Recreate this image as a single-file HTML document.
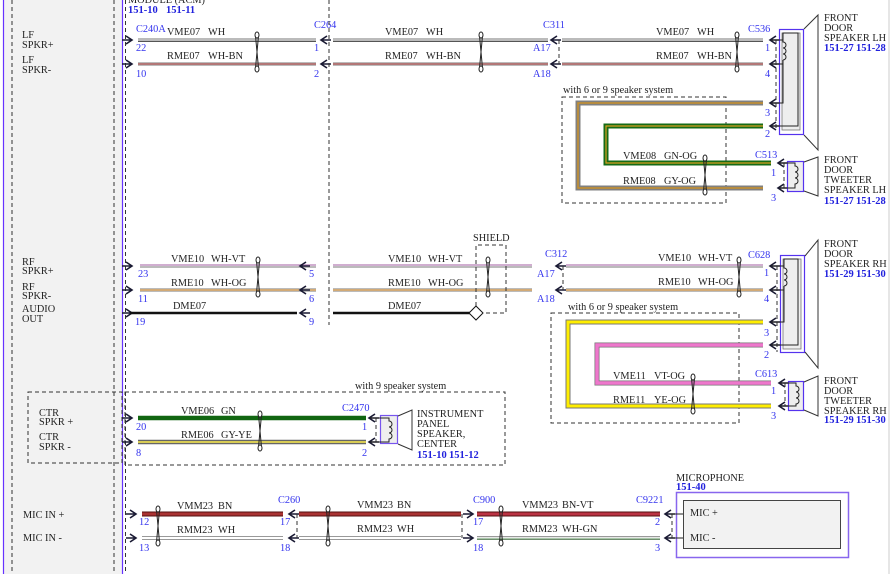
<!DOCTYPE html>
<html><head><meta charset="utf-8"><style>
html,body{margin:0;padding:0;background:#fff;}
svg{display:block;}
text{font-family:"Liberation Serif",serif;font-size:10.3px;fill:#222;}
.b{fill:#3333ee;}
.bb{fill:#2222dd;font-weight:bold;font-size:10.5px;}
.d{stroke:#333;stroke-width:1;stroke-dasharray:4,3;fill:none;}
.a{stroke:#1a1a33;stroke-width:1.5;fill:none;}
.t{stroke:#222;stroke-width:1;fill:#fff;}
</style></head><body>
<svg width="893" height="574" viewBox="0 0 893 574" xmlns="http://www.w3.org/2000/svg">
<defs>
<g id="tw"><path d="M-1.5 4 L1.5 36 M1.5 4 L-1.5 36" stroke="#222" stroke-width="1" fill="none"/><ellipse cx="0" cy="3" rx="2" ry="3" class="t"/><ellipse cx="0" cy="37" rx="2" ry="3" class="t"/></g>
<path id="ar" d="M-10 0 H0 M-6 -4 L0 0 L-6 4" stroke="#1a1a33" stroke-width="1.6" fill="none"/>
<path id="al" d="M10 0 H0 M6 -4 L0 0 L6 4" stroke="#1a1a33" stroke-width="1.6" fill="none"/>
</defs>
<rect x="3" y="0" width="119" height="574" fill="#f2f2f2"/>
<line x1="3.5" y1="0" x2="3.5" y2="574" stroke="#6633ff" stroke-width="1.2"/>
<line x1="122.5" y1="0" x2="122.5" y2="574" stroke="#6633ff" stroke-width="1.2"/>
<line x1="12" y1="0" x2="12" y2="574" class="d"/>
<line x1="114" y1="0" x2="114" y2="574" class="d"/>
<line x1="125.5" y1="0" x2="125.5" y2="574" class="d"/>
<line x1="889" y1="0" x2="889" y2="574" stroke="#ccc"/>
<text x="128" y="3">MODULE (ACM)</text>
<text x="128" y="13" class="bb">151-10</text><text x="166" y="13" class="bb">151-11</text>

<text x="22" y="38">LF</text><text x="22" y="48">SPKR+</text>
<text x="22" y="63">LF</text><text x="22" y="73">SPKR-</text>
<use href="#ar" x="132" y="40"/><use href="#ar" x="132" y="64"/>
<g stroke-linecap="butt">
<line x1="138" y1="40" x2="316" y2="40" stroke="#bbb" stroke-width="4"/><line x1="138" y1="41.5" x2="316" y2="41.5" stroke="#333" stroke-width="0.8"/>
<line x1="138" y1="64" x2="316" y2="64" stroke="#bbb" stroke-width="4"/><line x1="138" y1="64" x2="316" y2="64" stroke="#a33" stroke-width="1"/>
<line x1="333" y1="40" x2="548" y2="40" stroke="#bbb" stroke-width="4"/><line x1="333" y1="41.5" x2="548" y2="41.5" stroke="#333" stroke-width="0.8"/>
<line x1="333" y1="64" x2="548" y2="64" stroke="#bbb" stroke-width="4"/><line x1="333" y1="64" x2="548" y2="64" stroke="#a33" stroke-width="1"/>
<line x1="562" y1="40" x2="763" y2="40" stroke="#bbb" stroke-width="4"/><line x1="562" y1="41.5" x2="763" y2="41.5" stroke="#333" stroke-width="0.8"/>
<line x1="562" y1="64" x2="763" y2="64" stroke="#bbb" stroke-width="4"/><line x1="562" y1="64" x2="763" y2="64" stroke="#a33" stroke-width="1"/>
</g>
<text x="136" y="32" class="b">C240A</text><text x="167" y="35">VME07</text><text x="208" y="35">WH</text>
<text x="167" y="59">RME07</text><text x="208" y="59">WH-BN</text>
<text x="136" y="51" class="b">22</text><text x="136" y="77" class="b">10</text>
<use href="#tw" x="257" y="32"/>
<text x="314" y="28" class="b">C264</text><text x="314" y="51" class="b">1</text><text x="314" y="77" class="b">2</text>
<use href="#al" x="321" y="40"/><use href="#al" x="321" y="64"/>
<line x1="329" y1="0" x2="329" y2="325" class="d"/>
<text x="385" y="35">VME07</text><text x="426" y="35">WH</text>
<text x="385" y="59">RME07</text><text x="426" y="59">WH-BN</text>
<use href="#tw" x="481" y="32"/>
<text x="543" y="28" class="b">C311</text><text x="533" y="51" class="b">A17</text><text x="533" y="77" class="b">A18</text>
<use href="#al" x="551" y="40"/><use href="#al" x="551" y="64"/>
<line x1="559" y1="40" x2="559" y2="64" class="d"/>
<text x="656" y="35">VME07</text><text x="697" y="35">WH</text>
<text x="656" y="59">RME07</text><text x="697" y="59">WH-BN</text>
<use href="#tw" x="737" y="32"/>
<text x="748" y="32" class="b">C536</text><text x="765" y="51" class="b">1</text><text x="765" y="77" class="b">4</text>
<text x="765" y="116" class="b">3</text><text x="765" y="137" class="b">2</text>
<use href="#al" x="770" y="40"/><use href="#al" x="770" y="64"/><use href="#al" x="770" y="103"/><use href="#al" x="770" y="126"/>
<line x1="776" y1="40" x2="776" y2="130" class="d"/>
<rect x="779.5" y="29.5" width="24" height="105" fill="#fff" stroke="#5533ee" stroke-width="1.2"/>
<rect x="782" y="33" width="18" height="97" fill="#eee" stroke="#777" stroke-width="0.8"/>
<path d="M771 40 H783 V33 H798 V126 H771 M783 40 V42 a3 3 0 0 1 0 6 a3 3 0 0 1 0 6 a3 3 0 0 1 0 6 M783 60 V64 H771 M783 64 V103 H771" stroke="#222" fill="none" stroke-width="1"/>
<path d="M804 29 L818 15 V150 L804 135" stroke="#333" fill="none"/>
<text x="824" y="21">FRONT</text><text x="824" y="31">DOOR</text><text x="824" y="41">SPEAKER LH</text>
<text x="824" y="51" class="bb">151-27</text><text x="856" y="51" class="bb">151-28</text>
<text x="563" y="93">with 6 or 9 speaker system</text>
<rect x="562" y="97" width="164" height="106" class="d"/>
<path d="M763 103 H578 V188 H763" stroke="#808080" stroke-width="5" fill="none"/>
<path d="M763 103 H578 V188 H763" stroke="#c8902a" stroke-width="1.5" fill="none"/>
<path d="M763 126 H606 V163 H771" stroke="#166b16" stroke-width="5" fill="none"/>
<path d="M763 126 H606 V163 H771" stroke="#d8a020" stroke-width="1.2" fill="none"/>
<text x="623" y="159">VME08</text><text x="664" y="159">GN-OG</text>
<text x="623" y="184">RME08</text><text x="664" y="184">GY-OG</text>
<use href="#tw" x="705" y="155"/>
<text x="755" y="158" class="b">C513</text><text x="771" y="176" class="b">1</text><text x="771" y="201" class="b">3</text>
<use href="#al" x="778" y="163"/><use href="#al" x="778" y="188"/>
<line x1="784" y1="163" x2="784" y2="188" class="d"/>
<rect x="787.5" y="161.5" width="16" height="30" fill="#eee" stroke="#5533ee" stroke-width="1.2"/>
<path d="M779 163 H795 V166 a3 3 0 0 1 0 6 a3 3 0 0 1 0 6 a3 3 0 0 1 0 6 V188 H779" stroke="#222" fill="none"/>
<path d="M804 162 L818 157 V196 L804 191" stroke="#333" fill="none"/>
<text x="824" y="163">FRONT</text><text x="824" y="173">DOOR</text><text x="824" y="183">TWEETER</text><text x="824" y="193">SPEAKER LH</text>
<text x="824" y="204" class="bb">151-27</text><text x="856" y="204" class="bb">151-28</text>

<text x="22" y="265">RF</text><text x="22" y="274">SPKR+</text>
<text x="22" y="290">RF</text><text x="22" y="299">SPKR-</text>
<text x="22" y="312">AUDIO</text><text x="22" y="322">OUT</text>
<use href="#ar" x="132" y="266"/><use href="#ar" x="132" y="290"/><use href="#ar" x="132" y="313"/>
<line x1="140" y1="266" x2="316" y2="266" stroke="#bbb" stroke-width="4"/><line x1="140" y1="265" x2="316" y2="265" stroke="#e6a0e6" stroke-width="1"/>
<line x1="140" y1="290" x2="316" y2="290" stroke="#bbb" stroke-width="4"/><line x1="140" y1="290" x2="316" y2="290" stroke="#e89a30" stroke-width="1"/>
<line x1="130" y1="313" x2="297" y2="313" stroke="#111" stroke-width="2.5"/>
<text x="171" y="262">VME10</text><text x="211" y="262">WH-VT</text>
<text x="171" y="286">RME10</text><text x="211" y="286">WH-OG</text>
<text x="173" y="309">DME07</text>
<use href="#tw" x="258" y="257"/>
<text x="138" y="277" class="b">23</text><text x="138" y="302" class="b">11</text><text x="135" y="325" class="b">19</text>
<text x="309" y="277" class="b">5</text><text x="309" y="302" class="b">6</text><text x="309" y="325" class="b">9</text>
<use href="#al" x="300" y="266"/><use href="#al" x="300" y="290"/><use href="#al" x="300" y="313"/>
<line x1="333" y1="266" x2="532" y2="266" stroke="#bbb" stroke-width="4"/><line x1="333" y1="265" x2="532" y2="265" stroke="#e6a0e6" stroke-width="1"/>
<line x1="333" y1="290" x2="532" y2="290" stroke="#bbb" stroke-width="4"/><line x1="333" y1="290" x2="532" y2="290" stroke="#e89a30" stroke-width="1"/>
<line x1="333" y1="313" x2="470" y2="313" stroke="#111" stroke-width="2.5"/>
<text x="388" y="262">VME10</text><text x="428" y="262">WH-VT</text>
<text x="388" y="286">RME10</text><text x="428" y="286">WH-OG</text>
<text x="388" y="309">DME07</text>
<text x="473" y="241">SHIELD</text>
<path d="M476 313 V245 H506 V313 H483" class="d"/>
<path d="M476 306 L483 313 L476 320 L469 313 Z" stroke="#111" fill="#fff"/>
<use href="#tw" x="488" y="257"/>
<text x="545" y="257" class="b">C312</text><text x="537" y="277" class="b">A17</text><text x="537" y="302" class="b">A18</text>
<use href="#al" x="556" y="266"/><use href="#al" x="556" y="290"/>
<line x1="563" y1="266" x2="563" y2="290" class="d"/>
<line x1="566" y1="266" x2="763" y2="266" stroke="#bbb" stroke-width="4"/><line x1="566" y1="265" x2="763" y2="265" stroke="#e6a0e6" stroke-width="1"/>
<line x1="566" y1="290" x2="763" y2="290" stroke="#bbb" stroke-width="4"/><line x1="566" y1="290" x2="763" y2="290" stroke="#e89a30" stroke-width="1"/>
<text x="658" y="261">VME10</text><text x="698" y="261">WH-VT</text>
<text x="658" y="285">RME10</text><text x="698" y="285">WH-OG</text>
<use href="#tw" x="739" y="257"/>
<text x="748" y="258" class="b">C628</text><text x="764" y="276" class="b">1</text><text x="764" y="302" class="b">4</text>
<text x="764" y="336" class="b">3</text><text x="764" y="358" class="b">2</text>
<use href="#al" x="770" y="266"/><use href="#al" x="770" y="290"/><use href="#al" x="770" y="322"/><use href="#al" x="770" y="345"/>
<line x1="777" y1="266" x2="777" y2="352" class="d"/>
<rect x="780.5" y="255.5" width="24" height="97" fill="#fff" stroke="#5533ee" stroke-width="1.2"/>
<rect x="783" y="259" width="18" height="90" fill="#eee" stroke="#777" stroke-width="0.8"/>
<path d="M771 266 H784 V259 H798 V345 H771 M784 266 V268 a3 3 0 0 1 0 6 a3 3 0 0 1 0 6 a3 3 0 0 1 0 6 M784 286 V290 H771 M784 290 V322 H771" stroke="#222" fill="none"/>
<path d="M805 256 L818 240 V368 L805 352" stroke="#333" fill="none"/>
<text x="824" y="247">FRONT</text><text x="824" y="257">DOOR</text><text x="824" y="267">SPEAKER RH</text>
<text x="824" y="277" class="bb">151-29</text><text x="856" y="277" class="bb">151-30</text>
<text x="568" y="310">with 6 or 9 speaker system</text>
<rect x="551" y="313" width="188" height="110" class="d"/>
<path d="M763 322 H568 V406 H771" stroke="#777" stroke-width="5" fill="none"/>
<path d="M763 322 H568 V406 H771" stroke="#ffee00" stroke-width="3" fill="none"/>
<path d="M763 345 H597 V383 H771" stroke="#777" stroke-width="5" fill="none"/>
<path d="M763 345 H597 V383 H771" stroke="#ee77cc" stroke-width="3.5" fill="none"/>
<text x="613" y="379">VME11</text><text x="654" y="379">VT-OG</text>
<text x="613" y="403">RME11</text><text x="654" y="403">YE-OG</text>
<use href="#tw" x="693" y="374"/>
<text x="755" y="377" class="b">C613</text><text x="771" y="394" class="b">1</text><text x="771" y="419" class="b">3</text>
<use href="#al" x="779" y="383"/><use href="#al" x="779" y="406"/>
<line x1="785" y1="383" x2="785" y2="406" class="d"/>
<rect x="788.5" y="381.5" width="15" height="29" fill="#eee" stroke="#5533ee" stroke-width="1.2"/>
<path d="M780 383 H796 V386 a3 3 0 0 1 0 6 a3 3 0 0 1 0 6 a3 3 0 0 1 0 6 V406 H780" stroke="#222" fill="none"/>
<path d="M804 382 L818 376 V416 L804 410" stroke="#333" fill="none"/>
<text x="824" y="384">FRONT</text><text x="824" y="394">DOOR</text><text x="824" y="404">TWEETER</text><text x="824" y="414">SPEAKER RH</text>
<text x="824" y="423" class="bb">151-29</text><text x="856" y="423" class="bb">151-30</text>

<rect x="28" y="392" width="94" height="71" fill="#f2f2f2" class="d"/>
<text x="39" y="416">CTR</text><text x="39" y="425">SPKR +</text>
<text x="39" y="440">CTR</text><text x="39" y="450">SPKR -</text>
<text x="355" y="389">with 9 speaker system</text>
<rect x="125" y="392" width="380" height="73" class="d"/>
<use href="#ar" x="132" y="418"/><use href="#ar" x="132" y="442"/>
<line x1="138" y1="418" x2="366" y2="418" stroke="#116611" stroke-width="4.5"/>
<line x1="138" y1="442" x2="366" y2="442" stroke="#666" stroke-width="4.5"/><line x1="138" y1="442" x2="366" y2="442" stroke="#d8cc55" stroke-width="2"/>
<text x="181" y="414">VME06</text><text x="221" y="414">GN</text>
<text x="181" y="438">RME06</text><text x="221" y="438">GY-YE</text>
<use href="#tw" x="260" y="411"/>
<text x="136" y="430" class="b">20</text><text x="136" y="456" class="b">8</text>
<text x="342" y="411" class="b">C2470</text><text x="362" y="430" class="b">1</text><text x="362" y="456" class="b">2</text>
<use href="#al" x="369" y="418"/><use href="#al" x="369" y="442"/>
<line x1="376" y1="418" x2="376" y2="442" class="d"/>
<rect x="380.5" y="415.5" width="17" height="28" fill="#eee" stroke="#7755ee" stroke-width="1.2"/>
<path d="M370 418 H389 V421 a3 3 0 0 1 0 6 a3 3 0 0 1 0 6 a3 3 0 0 1 0 6 V442 H370" stroke="#222" fill="none"/>
<path d="M398 416 L412 410 V450 L398 444" stroke="#333" fill="none"/>
<text x="417" y="417">INSTRUMENT</text><text x="417" y="427">PANEL</text><text x="417" y="437">SPEAKER,</text><text x="417" y="447">CENTER</text>
<text x="417" y="458" class="bb">151-10</text><text x="449" y="458" class="bb">151-12</text>

<text x="23" y="518">MIC IN +</text><text x="23" y="541">MIC IN -</text>
<use href="#ar" x="136" y="514"/><use href="#ar" x="136" y="538"/>
<line x1="142" y1="514" x2="283" y2="514" stroke="#551111" stroke-width="5"/><line x1="142" y1="514" x2="283" y2="514" stroke="#aa3333" stroke-width="3"/>
<line x1="142" y1="538" x2="283" y2="538" stroke="#999" stroke-width="4"/><line x1="142" y1="538" x2="283" y2="538" stroke="#fff" stroke-width="2"/>
<use href="#tw" x="158" y="506"/>
<text x="177" y="509">VMM23</text><text x="218" y="509">BN</text>
<text x="177" y="533">RMM23</text><text x="218" y="533">WH</text>
<text x="139" y="525" class="b">12</text><text x="139" y="551" class="b">13</text>
<text x="278" y="503" class="b">C260</text><text x="280" y="525" class="b">17</text><text x="280" y="551" class="b">18</text>
<use href="#al" x="289" y="514"/><use href="#al" x="289" y="538"/>
<line x1="297" y1="514" x2="297" y2="538" class="d"/>
<line x1="299" y1="514" x2="461" y2="514" stroke="#551111" stroke-width="5"/><line x1="299" y1="514" x2="461" y2="514" stroke="#aa3333" stroke-width="3"/>
<line x1="299" y1="538" x2="461" y2="538" stroke="#999" stroke-width="4"/><line x1="299" y1="538" x2="461" y2="538" stroke="#fff" stroke-width="2"/>
<use href="#tw" x="328" y="506"/>
<text x="357" y="508">VMM23</text><text x="397" y="508">BN</text>
<text x="357" y="532">RMM23</text><text x="397" y="532">WH</text>
<line x1="462" y1="514" x2="462" y2="538" class="d"/>
<use href="#ar" x="473" y="514"/><use href="#ar" x="473" y="538"/>
<text x="473" y="503" class="b">C900</text><text x="473" y="525" class="b">17</text><text x="473" y="551" class="b">18</text>
<line x1="477" y1="514" x2="660" y2="514" stroke="#551111" stroke-width="5"/><line x1="477" y1="514" x2="660" y2="514" stroke="#bb3344" stroke-width="3"/>
<line x1="477" y1="538" x2="660" y2="538" stroke="#999" stroke-width="4"/><line x1="477" y1="538" x2="660" y2="538" stroke="#fff" stroke-width="1.5"/><line x1="477" y1="539" x2="660" y2="539" stroke="#2a7a2a" stroke-width="0.8"/>
<use href="#tw" x="501" y="506"/>
<text x="522" y="508">VMM23</text><text x="562" y="508">BN-VT</text>
<text x="522" y="532">RMM23</text><text x="562" y="532">WH-GN</text>
<text x="636" y="503" class="b">C9221</text><text x="655" y="525" class="b">2</text><text x="655" y="551" class="b">3</text>
<use href="#al" x="665" y="514"/><use href="#al" x="665" y="538"/>
<line x1="672" y1="514" x2="672" y2="538" class="d"/>
<text x="676" y="481">MICROPHONE</text>
<text x="676" y="490" class="bb">151-40</text>
<rect x="676.5" y="492.5" width="172" height="65" fill="#fff" stroke="#8866ee" stroke-width="1.5"/>
<rect x="683.5" y="500.5" width="157" height="48" fill="#f2f2f2" stroke="#444" stroke-width="1"/>
<line x1="671" y1="514" x2="683" y2="514" stroke="#222"/><line x1="671" y1="538" x2="683" y2="538" stroke="#222"/>
<text x="690" y="516">MIC +</text><text x="690" y="541">MIC -</text>
</svg>
</body></html>
